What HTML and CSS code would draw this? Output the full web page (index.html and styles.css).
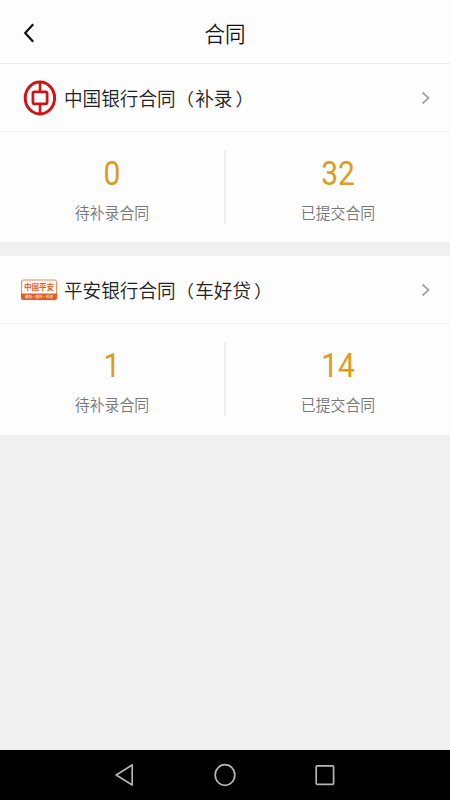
FILE: index.html
```
<!DOCTYPE html>
<html lang="zh-CN">
<head>
<meta charset="utf-8">
<title>合同</title>
<link rel="stylesheet" href="styles.css">
</head>
<body>
<header class="header">
  <svg class="back" width="12" height="20" viewBox="0 0 12 20"><path d="M10.2 1.2 2.2 10l8 8.8"/></svg>
  <h1 class="title">合同</h1>
</header>
<main class="main">
  <section class="card">
    <div class="row">
      <svg class="logo" width="38" height="36" viewBox="0 0 38 36">
        <g fill="none" stroke="#cf1518"><ellipse cx="19.9" cy="18" rx="14.7" ry="15.9" stroke-width="3"/><path stroke-width="2.6" d="M20 3v8M20 24v9"/><rect x="12.9" y="11.8" width="14.2" height="12" rx="1.5" stroke-width="2.7"/></g>
      </svg>
      <h2 class="name">中国银行合同<span class="open">（</span>补录<span class="close">）</span></h2>
      <svg class="more" width="10" height="14" viewBox="0 0 10 14"><path d="m1.5 1.5 6 5.5-6 5.5"/></svg>
    </div>
    <div class="stats">
      <div class="stat"><span class="num">0</span><span class="label">待补录合同</span></div>
      <div class="divider"></div>
      <div class="stat"><span class="num">32</span><span class="label">已提交合同</span></div>
    </div>
  </section>
  <section class="card">
    <div class="row">
      <svg class="logo" width="38" height="36" viewBox="0 0 38 36">
        <rect x="1.4" y="8" width="35.2" height="19.6" rx="2" fill="#fffaf5" stroke="#e08a58"/>
        <path fill="#d9622b" d="M1 21.5h36V26q0 2-2 2H3q-2 0-2-2z"/>
        <text class="brand" x="19" y="18.3">中国平安</text>
        <text class="tagline" x="19" y="26.2">保险·银行·投资</text>
      </svg>
      <h2 class="name">平安银行合同<span class="open">（</span>车好贷<span class="close">）</span></h2>
      <svg class="more" width="10" height="14" viewBox="0 0 10 14"><path d="m1.5 1.5 6 5.5-6 5.5"/></svg>
    </div>
    <div class="stats">
      <div class="stat"><span class="num">1</span><span class="label">待补录合同</span></div>
      <div class="divider"></div>
      <div class="stat"><span class="num">14</span><span class="label">已提交合同</span></div>
    </div>
  </section>
</main>
<nav class="navbar">
  <svg width="22" height="24" viewBox="0 0 22 24"><path d="M18.2 2v20L2.2 12z"/></svg>
  <svg width="22" height="24" viewBox="0 0 22 24"><ellipse cx="11" cy="12" rx="9.8" ry="10.3"/></svg>
  <svg width="22" height="24" viewBox="0 0 22 24"><rect x="2.2" y="2.9" width="17.4" height="18.4" rx="1"/></svg>
</nav>
</body>
</html>
```
FILE: styles.css
```
* { box-sizing: border-box; }
body {
  margin: 0;
  height: 800px;
  display: flex;
  flex-direction: column;
  background: #f0f0f0;
  font-family: Roboto, "Noto Sans CJK SC", sans-serif;
}
h1, h2 { margin: 0; font-weight: 350; }
svg { display: block; flex: none; }
.header {
  height: 64px;
  display: grid;
  grid-template-columns: 60px 1fr 60px;
  align-items: center;
  padding-top: 3px;
  background: #fdfdfd;
  border-bottom: 1px solid #ececec;
}
.back { margin-left: 23px; }
.back path { fill: none; stroke: #111; stroke-width: 2.2; }
.title {
  font-size: 20.5px;
  line-height: 30px;
  padding-top: 4px;
  text-align: center;
  color: #111;
  transform: scaleY(1.04);
}
.main { flex: 1; }
.card { background: #fdfdfd; margin-bottom: 14px; height: 178px; }
.card + .card { height: 179px; }
.row {
  height: 68px;
  display: flex;
  align-items: center;
  padding: 0 19px 0 20px;
  border-bottom: 1px solid #f3f3f3;
}
.name {
  flex: 1;
  margin-left: 6px;
  padding-top: 4px;
  font-size: 18.6px;
  line-height: 28px;
  color: #222;
  white-space: nowrap;
  transform: scaleY(1.06);
}
.open, .close { display: inline-block; transform: scaleY(.88); }
.open { margin-right: 1px; }
.close { margin-left: 3px; }
.more path { fill: none; stroke: #a5a5a5; stroke-width: 1.8; }
.brand, .tagline { text-anchor: middle; font-family: "Noto Sans CJK SC", sans-serif; font-weight: 700; }
.brand { font-size: 7.5px; fill: #d9622b; }
.tagline { font-size: 3.5px; fill: #fbd9c4; }
.stats { display: flex; padding-top: 18px; }
.divider { width: 2px; height: 74px; background: #eee; }
.stat { flex: 1; display: flex; flex-direction: column; align-items: center; }
.num { font-size: 30px; line-height: 36px; margin-top: 6px; color: #dc9c1c; transform: scaleY(1.08); }
.label { font-size: 14.9px; line-height: 22px; margin-top: 11px; color: #777; transform: scaleY(1.06); font-weight: 350; }
.navbar {
  height: 50px;
  background: #000;
  display: flex;
  justify-content: center;
  align-items: center;
  gap: 78px;
}
.navbar svg { fill: none; stroke: #b5b5b5; stroke-width: 1.7; stroke-linejoin: round; }
```
